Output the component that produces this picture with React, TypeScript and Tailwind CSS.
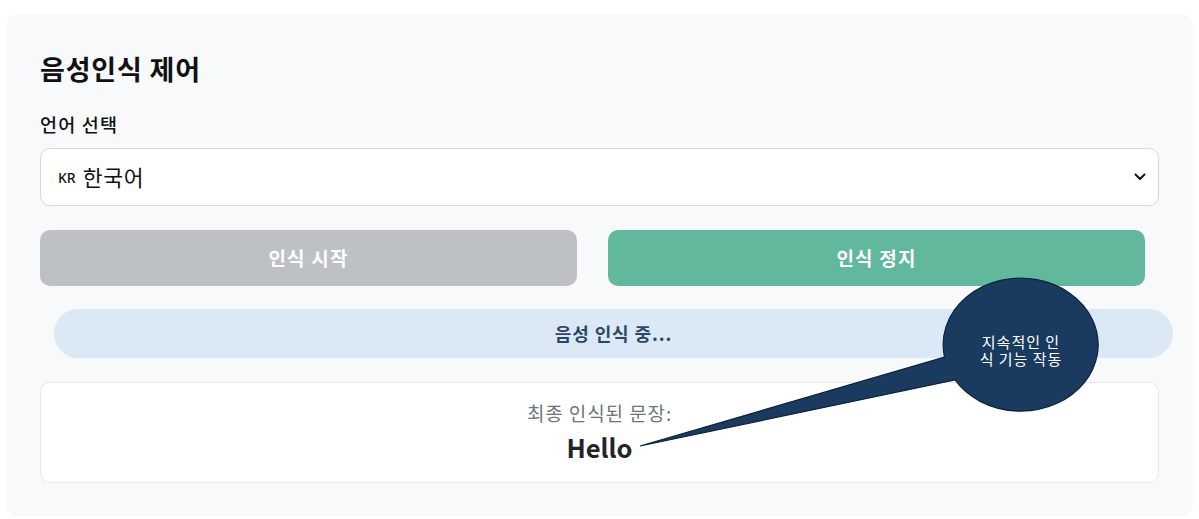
import React from "react";

export default function App() {
  return (
    <div
      className="relative w-full h-[519px] bg-white pt-[14px] pl-[6px] pr-[6px] overflow-hidden"
      style={{ fontFamily: '"Noto Sans CJK KR", "Noto Sans", sans-serif' }}
    >
      <div className="h-[502px] rounded-[12px] bg-[#f8f9fa] px-[34px] pt-[39px]">
        <h2 className="text-[27px] leading-[32px] font-bold tracking-[0.8px] text-[#111]">음성인식 제어</h2>
        <div className="mt-[27px] text-[18.5px] leading-[24px] font-medium tracking-[1.2px] text-[#111]">언어 선택</div>
        <div className="mt-[12px] h-[58px] flex items-center justify-between rounded-[10px] border border-[#d6d8dc] bg-white pl-[17px] pr-[12px]">
          <div className="flex items-center gap-[7px] text-[#111]">
            <span className="text-[14px] font-medium" style={{ fontFamily: '"Noto Sans", sans-serif' }}>KR</span>
            <span className="text-[21.5px] tracking-[0.8px]">한국어</span>
          </div>
          <svg width="12" height="8" viewBox="0 0 12 8" fill="none">
            <path d="M1.5 1.5l4.5 4.5 4.5-4.5" stroke="#111" strokeWidth="2" strokeLinecap="round" strokeLinejoin="round" />
          </svg>
        </div>
        <div className="mt-[24px] flex gap-[31px] pr-[14px]">
          <div className="flex-1 h-[56px] rounded-[10px] bg-[#bdc1c5] flex items-center justify-center text-white text-[19px] font-bold tracking-[1.2px]">
            인식 시작
          </div>
          <div className="flex-1 h-[56px] rounded-[10px] bg-[#62b89c] flex items-center justify-center text-white text-[19px] font-bold tracking-[1.2px]">
            인식 정지
          </div>
        </div>
        <div className="mt-[23px] ml-[14px] mr-[-14px] h-[49px] rounded-full bg-[#dbe8f5] flex items-center justify-center text-[#2c4866] text-[18px] font-bold tracking-[0.9px]">
          음성 인식 중...
        </div>
        <div className="mt-[24px] h-[101px] rounded-[10px] border border-[#e5e7eb] bg-white flex flex-col items-center pt-[17px]">
          <div className="text-[19px] leading-[26px] tracking-[0.9px] text-[#6c757d]">최종 인식된 문장:</div>
          <div className="mt-[5px] text-[25.5px] leading-[32px] font-bold text-[#212529]">Hello</div>
        </div>
      </div>

      <svg className="absolute left-0 top-0 pointer-events-none" width="1199" height="519" viewBox="0 0 1199 519">
        <path
          d="M640 446 L944.5 357 A77.5 66.5 0 1 1 955 380 Z"
          fill="#1a3a5f"
          stroke="#0c2338"
          strokeWidth="1.2"
          strokeLinejoin="miter"
        />
      </svg>
      <div className="absolute left-[955px] top-[333px] w-[132px] text-center text-white text-[15px] leading-[17px] tracking-[1px]">
        <div>지속적인 인</div>
        <div>식 기능 작동</div>
      </div>
    </div>
  );
}
